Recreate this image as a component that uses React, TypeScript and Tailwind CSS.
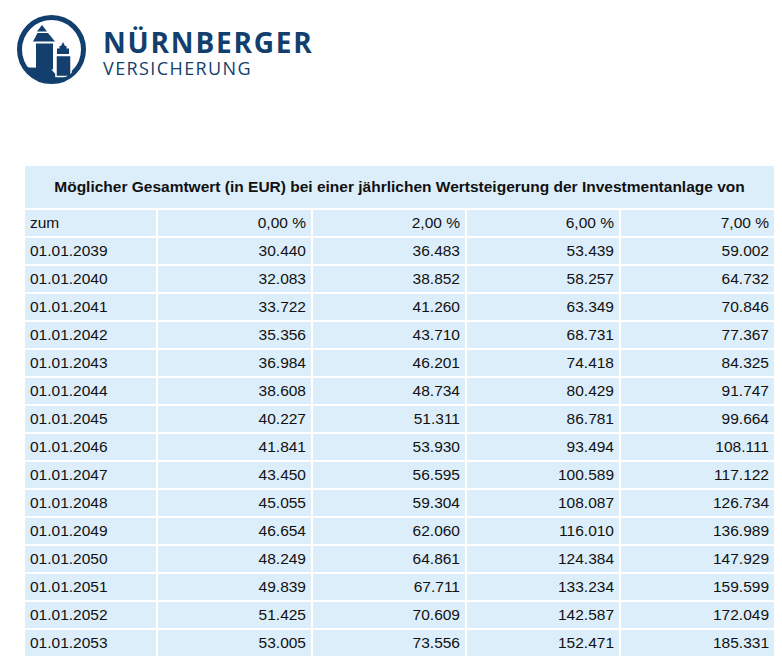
const rows: [string, string, string, string, string][] = [
  ['01.01.2039', '30.440', '36.483', '53.439', '59.002'],
  ['01.01.2040', '32.083', '38.852', '58.257', '64.732'],
  ['01.01.2041', '33.722', '41.260', '63.349', '70.846'],
  ['01.01.2042', '35.356', '43.710', '68.731', '77.367'],
  ['01.01.2043', '36.984', '46.201', '74.418', '84.325'],
  ['01.01.2044', '38.608', '48.734', '80.429', '91.747'],
  ['01.01.2045', '40.227', '51.311', '86.781', '99.664'],
  ['01.01.2046', '41.841', '53.930', '93.494', '108.111'],
  ['01.01.2047', '43.450', '56.595', '100.589', '117.122'],
  ['01.01.2048', '45.055', '59.304', '108.087', '126.734'],
  ['01.01.2049', '46.654', '62.060', '116.010', '136.989'],
  ['01.01.2050', '48.249', '64.861', '124.384', '147.929'],
  ['01.01.2051', '49.839', '67.711', '133.234', '159.599'],
  ['01.01.2052', '51.425', '70.609', '142.587', '172.049'],
  ['01.01.2053', '53.005', '73.556', '152.471', '185.331'],
];

function Logo() {
  return (
    <svg width="74" height="74" viewBox="15 13 74 74" className="shrink-0">
      <defs>
        <clipPath id="inner">
          <circle cx="51.5" cy="49.5" r="31" />
        </clipPath>
      </defs>
      <circle cx="51.5" cy="49.5" r="32" fill="none" stroke="#123f6d" strokeWidth="5" />
      <g clipPath="url(#inner)" fill="#123f6d">
        <path d="M15 67 L50 68 L57 76 L90 75 L90 90 L15 90 Z" />
        <polygon points="42,25 47,31.5 37,31.5" />
        <polygon points="37.5,33 48,33 55,41.5 33,41.5" />
        <rect x="36" y="43.5" width="17" height="26" />
        <polygon points="63,42 65,46 66.5,46 66.5,48.5 69,48.5 69,54 57,54 57,48.5 59.5,48.5 59.5,46 61,46" />
        <rect x="56" y="55.5" width="15" height="21" stroke="#ffffff" strokeWidth="1.5" />
      </g>
    </svg>
  );
}

export default function App() {
  const cell = 'h-[26px] px-[5px] bg-[#ddeefb] text-[15.5px] text-[#111] leading-none';
  return (
    <div className="w-[782px] h-[660px] overflow-hidden bg-white font-['Liberation_Sans',Arial,sans-serif]">
      <div className="flex items-start gap-[14px] pl-[15px] pt-[13px]">
        <Logo />
        <div className="mt-[14px] flex flex-col font-['Open_Sans',sans-serif] text-[#123f6d]">
          <span className="text-[28px] font-bold leading-[30px] tracking-[1.8px]">NÜRNBERGER</span>
          <span className="text-[18px] leading-[22px] tracking-[1.4px]">VERSICHERUNG</span>
        </div>
      </div>

      <table className="ml-[23px] mt-[77px] w-[753px] table-fixed border-separate border-spacing-[2px]">
        <colgroup>
          <col className="w-[131px]" />
          <col className="w-[153px]" />
          <col className="w-[152px]" />
          <col className="w-[152px]" />
          <col />
        </colgroup>
        <thead>
          <tr>
            <th colSpan={5} className="h-[42px] bg-[#ddeefb] text-center text-[15.5px] font-bold text-[#111]">
              Möglicher Gesamtwert (in EUR) bei einer jährlichen Wertsteigerung der Investmentanlage von
            </th>
          </tr>
        </thead>
        <tbody>
          <tr>
            <td className={`${cell} text-left`}>zum</td>
            <td className={`${cell} text-right`}>0,00 %</td>
            <td className={`${cell} text-right`}>2,00 %</td>
            <td className={`${cell} text-right`}>6,00 %</td>
            <td className={`${cell} text-right`}>7,00 %</td>
          </tr>
          {rows.map((r) => (
            <tr key={r[0]}>
              <td className={`${cell} text-left`}>{r[0]}</td>
              <td className={`${cell} text-right`}>{r[1]}</td>
              <td className={`${cell} text-right`}>{r[2]}</td>
              <td className={`${cell} text-right`}>{r[3]}</td>
              <td className={`${cell} text-right`}>{r[4]}</td>
            </tr>
          ))}
        </tbody>
      </table>
    </div>
  );
}
